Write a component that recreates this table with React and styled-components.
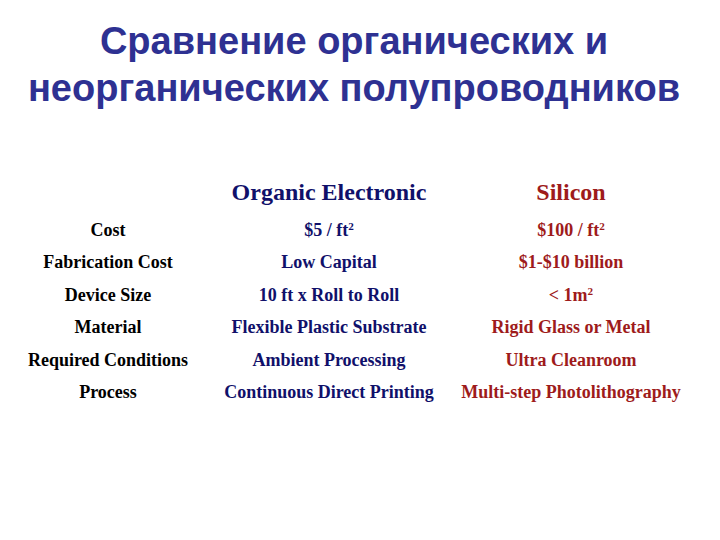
import React from "react";
import styled, { createGlobalStyle } from "styled-components";

const GlobalStyle = createGlobalStyle`
  html, body {
    margin: 0;
    padding: 0;
    background: #ffffff;
  }
`;

const rows = [
  { label: "Cost", organic: <>$5 / ft<sup>2</sup></>, silicon: <>$100 / ft<sup>2</sup></> },
  { label: "Fabrication Cost", organic: "Low Capital", silicon: "$1-$10 billion" },
  { label: "Device Size", organic: "10 ft x Roll to Roll", silicon: <>&lt; 1m<sup>2</sup></> },
  { label: "Material", organic: "Flexible Plastic Substrate", silicon: "Rigid Glass or Metal" },
  { label: "Required Conditions", organic: "Ambient Processing", silicon: "Ultra Cleanroom" },
  { label: "Process", organic: "Continuous Direct Printing", silicon: "Multi-step Photolithography" },
];

function App() {
  return (
    <Slide>
      <GlobalStyle />
      <Title>
        Сравнение органических и
        <br />
        неорганических полупроводников
      </Title>
      <Table>
        <Head />
        <Head color="#10106a">Organic Electronic</Head>
        <Head color="#9e1b1b">Silicon</Head>
        {rows.map((r) => (
          <React.Fragment key={r.label}>
            <Cell>{r.label}</Cell>
            <Cell color="#10106a">{r.organic}</Cell>
            <Cell color="#9e1b1b">{r.silicon}</Cell>
          </React.Fragment>
        ))}
      </Table>
    </Slide>
  );
}

const Slide = styled.div`
  width: 720px;
  height: 540px;
  overflow: hidden;
  background: #ffffff;
`;

const Title = styled.h1`
  margin: 0;
  padding: 18px 12px 0 0;
  font-family: "Liberation Sans", Arial, sans-serif;
  font-weight: bold;
  font-size: 38px;
  line-height: 47px;
  color: #2e3192;
  text-align: center;
`;

const Table = styled.div`
  display: grid;
  grid-template-columns: 216px 226px 258px;
  margin-top: 65px;
  font-family: "Liberation Serif", "Times New Roman", serif;
`;

const Head = styled.div`
  font-size: 24px;
  font-weight: bold;
  line-height: 30px;
  color: ${(p) => p.color || "#000"};
  text-align: center;
  margin-bottom: 7px;
`;

const Cell = styled.div`
  font-size: 18px;
  font-weight: bold;
  line-height: 32.4px;
  color: ${(p) => p.color || "#000"};
  text-align: center;
  white-space: nowrap;

  sup {
    font-size: 62%;
    line-height: 0;
    vertical-align: 0.5em;
  }
`;

export default App;
